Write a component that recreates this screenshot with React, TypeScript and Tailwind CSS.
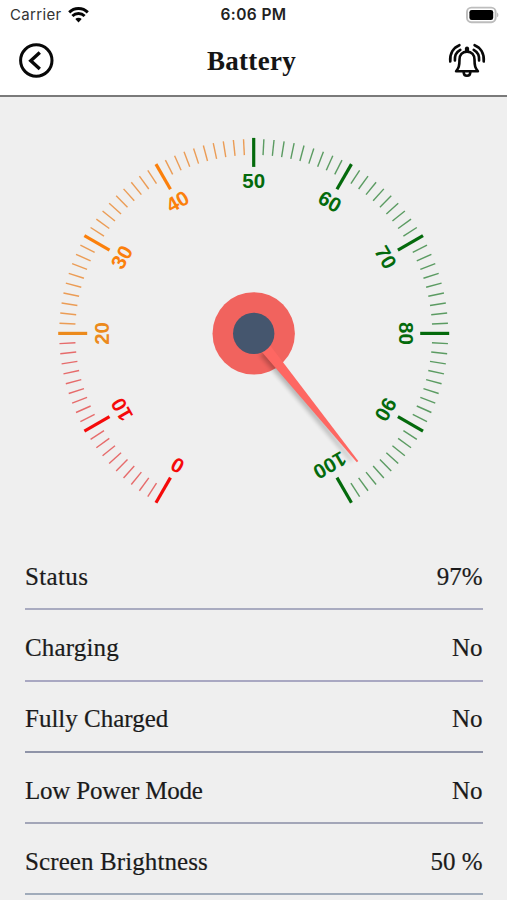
import React from "react";

const rows = [
  { label: "Status", value: "97%", labelCls: "tracking-[0.35px]", line: "border-[#a9abc0]" },
  { label: "Charging", value: "No", labelCls: "tracking-[0.15px]", line: "border-[#a9a8c2]" },
  { label: "Fully Charged", value: "No", labelCls: "", line: "border-[#8f94a8]" },
  { label: "Low Power Mode", value: "No", labelCls: "tracking-[-0.2px]", line: "border-[#a3a6b8]" },
  { label: "Screen Brightness", value: "50 %", labelCls: "tracking-[0.1px]", line: "border-[#a0abba]" },
];

const majorColor = (n: number) => {
  if (n < 20) return "#f50a0a";
  if (n === 20) return "#ec8a1c";
  return n < 50 ? "#fb800c" : "#046a0c";
};

const minorColor = (n: number) => {
  if (n < 20) return "#e66b6b";
  return n < 50 ? "#eb9c55" : "#5b9b62";
};

const StatusBar: React.FC = () => (
  <div className="flex h-[30px] items-center justify-between pl-[10px] pr-[7px] font-['Inter',sans-serif] text-[15px]">
    <div className="flex w-[150px] items-center gap-[6px] text-[#333]">
      <span className="tracking-[0.35px]">Carrier</span>
      <svg width="21" height="16" viewBox="0 0 21 16" fill="none" stroke="#050505" strokeWidth="2.9">
        <path d="M1.2 5.4a13.2 13.2 0 0 1 18.6 0" />
        <path d="M4.4 9.1a8.6 8.6 0 0 1 12.2 0" />
        <path d="M10.5 15.4 7.3 12.1a4.5 4.5 0 0 1 6.4 0z" fill="#050505" stroke="none" />
      </svg>
    </div>
    <span className="mr-[3px] text-[15.5px] font-semibold tracking-[0.4px] text-[#222]">6:06 PM</span>
    <div className="flex w-[150px] justify-end">
      <svg width="34" height="18" viewBox="0 0 35 18">
        <rect x="1" y="1.4" width="29.5" height="15" rx="4.5" fill="#fff" stroke="#bdbdbd" strokeWidth="2" />
        <rect x="3.5" y="3.8" width="24.5" height="10.4" rx="2.4" fill="#000" />
        <path d="M32 6.4a3 3 0 0 1 0 5z" fill="#bdbdbd" />
      </svg>
    </div>
  </div>
);

const Header: React.FC = () => (
  <div className="flex h-[65px] items-center justify-between pl-[19px] pr-[21px] pb-[4px]">
    <svg width="36" height="36" viewBox="0 0 36 36" fill="none" stroke="#080808">
      <circle cx="17.3" cy="17.5" r="15.7" strokeWidth="3" />
      <path d="M20.8 9.6 11.8 17.8 20.8 26" strokeWidth="3.4" />
    </svg>
    <h1 className="pt-px font-['Liberation_Serif',serif] text-[27px] font-bold tracking-[0.3px] text-[#151515]">Battery</h1>
    <svg width="38" height="36" viewBox="0 0 38 36" fill="none" stroke="#080808" strokeWidth="2.6" strokeLinecap="round" strokeLinejoin="round">
      <path d="M19 5.5V8" strokeWidth="4.2" />
      <path d="M19 8.6c-4.8 0-7.5 3.4-7.5 8 0 6.5-.8 8.2-3.4 11.6h21.8c-2.6-3.4-3.4-5.1-3.4-11.6 0-4.6-2.7-8-7.5-8z" />
      <path d="M15.7 29.2c0 2.3 1.4 3.6 3.3 3.6s3.3-1.3 3.3-3.6" />
      <path d="M11.4 2.2C5.5 4.5 1.5 10.5 2.3 18.5M12.3 6.8C8.2 9 6.5 12.5 6.9 17.5" />
      <path d="M26.6 2.2c5.9 2.3 9.9 8.3 9.1 16.3M25.7 6.8c4.1 2.2 5.8 5.7 5.4 10.7" />
    </svg>
  </div>
);

const Gauge: React.FC<{ value: number }> = ({ value }) => (
  <svg width="507" height="442" viewBox="0 97 507 442" className="block shrink-0">
    <defs>
      <filter id="soft" x="-100%" y="-20%" width="300%" height="140%">
        <feGaussianBlur stdDeviation="2" />
      </filter>
    </defs>
    <g transform="translate(253.7 333.4)">
      {Array.from({ length: 101 }, (_, n) => {
        const major = n % 10 === 0;
        return (
          <g key={n} transform={`rotate(${n * 3 - 150})`}>
            <line
              y1={major ? -195.5 : -194.5}
              y2={major ? -166.5 : -178.5}
              stroke={major ? majorColor(n) : minorColor(n)}
              strokeWidth={major ? 3.2 : 1.4}
            />
            {major && (
              <text
                y="-145.2"
                textAnchor="middle"
                fontFamily="'Liberation Sans', Arial, sans-serif"
                fontSize="20.5"
                fontWeight="bold"
                fill={majorColor(n)}
              >
                {n}
              </text>
            )}
          </g>
        );
      })}
      <circle r="41.2" fill="#f1635e" />
      {/* needle and its shadow */}
      <g transform="translate(-2.5 3)" opacity="0.24">
        <path d="M-5 -20 L-1 -160 L1 -160 L5 -20z" transform={`rotate(${value * 3 - 150})`} filter="url(#soft)" />
      </g>
      <path d="M-5.6 -10 L-0.9 -165 L0.9 -165 L5.6 -10z" fill="#fe6762" transform={`rotate(${value * 3 - 150})`} />
      <circle r="20.7" fill="#45566e" />
    </g>
  </svg>
);

const App: React.FC = () => {
  return (
    <div className="flex h-[900px] w-[507px] flex-col overflow-hidden bg-[#efefef]">
      <header className="h-[97px] shrink-0 border-b-2 border-[#7a7a7a] bg-white">
        <StatusBar />
        <Header />
      </header>
      <Gauge value={97} />
      <main className="pl-[25px] pr-[24.5px] font-['Liberation_Serif',serif] text-[25px] text-[#1b1b1b] [-webkit-text-stroke:0.2px_#1b1b1b]">
        {rows.map((row) => (
          <div key={row.label} className={`flex h-[71.25px] items-center justify-between border-b-2 pt-[6px] ${row.line}`}>
            <span className={row.labelCls}>{row.label}</span>
            <span>{row.value}</span>
          </div>
        ))}
      </main>
    </div>
  );
};

export default App;
